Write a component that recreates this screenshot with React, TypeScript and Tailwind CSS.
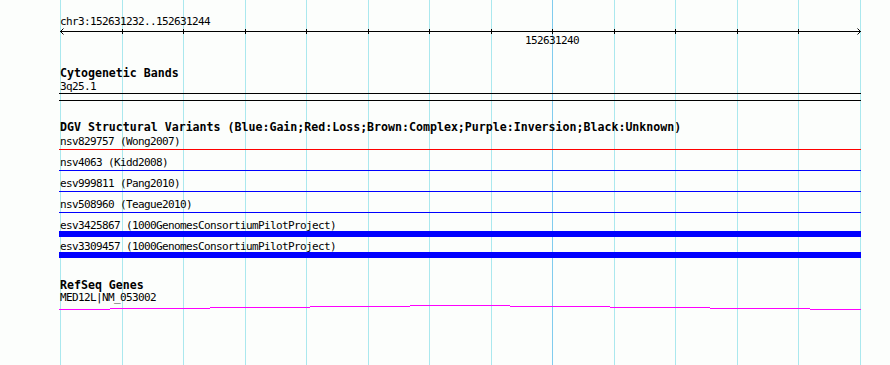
import React from "react";

const gridLines: { cls: string; major?: boolean }[] = [
  { cls: "left-[60px]" },
  { cls: "left-[122px]" },
  { cls: "left-[183px]" },
  { cls: "left-[245px]" },
  { cls: "left-[306px]" },
  { cls: "left-[368px]" },
  { cls: "left-[429px]" },
  { cls: "left-[491px]" },
  { cls: "left-[552px]", major: true },
  { cls: "left-[614px]" },
  { cls: "left-[675px]" },
  { cls: "left-[737px]" },
  { cls: "left-[798px]" },
  { cls: "left-[860px]" },
];

const tickXs = [122, 183, 245, 306, 368, 429, 491, 552, 614, 675, 737, 798];

const mono = "font-['DejaVu_Sans_Mono',monospace]";
const txt = `${mono} text-[11px] tracking-[-0.62px] leading-[13px] h-[13px] pl-[1px] whitespace-pre text-black`;
const bold = `${mono} text-[11.6px] font-bold leading-[13px] h-[13px] pl-[1px] whitespace-pre text-black`;

function Ruler() {
  return (
    <svg width={802} height={6} className="block overflow-visible" shapeRendering="crispEdges">
      <line x1={1} y1={3.5} x2={802} y2={3.5} stroke="#000" strokeWidth={1} />
      {tickXs.map((x) => (
        <line key={x} x1={x - 59 + 0.5} y1={1} x2={x - 59 + 0.5} y2={6} stroke="#000" strokeWidth={1} />
      ))}
      <polyline points="4.5,0.5 1.5,3.5 4.5,6.5" fill="none" stroke="#000" strokeWidth={1} shapeRendering="auto" />
      <polyline points="798.5,0.5 801.5,3.5 798.5,6.5" fill="none" stroke="#000" strokeWidth={1} shapeRendering="auto" />
    </svg>
  );
}

function GeneLine() {
  const segs: [number, number, number][] = [
    [59, 110, 5],
    [110, 210, 4],
    [210, 310, 3],
    [310, 410, 2],
    [410, 510, 1],
    [510, 610, 2],
    [610, 710, 3],
    [710, 810, 4],
    [810, 861, 5],
  ];
  return (
    <svg width={802} height={6} className="block" shapeRendering="crispEdges">
      {segs.map(([a, b, y]) => (
        <rect key={a} x={a - 59} y={y} width={b - a} height={1} fill="#ff00ff" />
      ))}
    </svg>
  );
}

export default function App() {
  return (
    <div className="relative w-[890px] h-[365px] overflow-hidden bg-[#fcfefc]">
      {gridLines.map((g, i) => (
        <div
          key={i}
          className={`absolute top-0 h-[365px] w-[1px] ${g.cls} ${g.major ? "bg-[#80ccee]" : "bg-[#aae8ee]"}`}
        />
      ))}
      <div className="relative z-10 flex flex-col pl-[59px] w-[861px]">
        <div className="h-[15px]" />
        <div className={txt}>chr3:152631232..152631244</div>
        <Ruler />
        <div className={`${txt} ml-[465px]`}>152631240</div>

        <div className="h-[20px]" />
        <div className={bold}>Cytogenetic Bands</div>
        <div className={txt}>3q25.1</div>
        <div className="h-[1px] w-[802px] bg-black" />
        <div className="h-[6px]" />
        <div className="h-[1px] w-[802px] bg-black" />

        <div className="h-[20px]" />
        <div className={bold}>DGV Structural Variants (Blue:Gain;Red:Loss;Brown:Complex;Purple:Inversion;Black:Unknown)</div>

        <div className="h-[1px]" />
        <div className={txt}>nsv829757 (Wong2007)</div>
        <div className="h-[1px]" />
        <div className="h-[1px] w-[802px] bg-[#ff0000]" />

        <div className="h-[6px]" />
        <div className={txt}>nsv4063 (Kidd2008)</div>
        <div className="h-[1px]" />
        <div className="h-[1px] w-[802px] bg-[#0000ff]" />

        <div className="h-[6px]" />
        <div className={txt}>esv999811 (Pang2010)</div>
        <div className="h-[1px]" />
        <div className="h-[1px] w-[802px] bg-[#0000ff]" />

        <div className="h-[6px]" />
        <div className={txt}>nsv508960 (Teague2010)</div>
        <div className="h-[1px]" />
        <div className="h-[1px] w-[802px] bg-[#0000ff]" />

        <div className="h-[6px]" />
        <div className={`${txt} !h-[12px]`}>esv3425867 (1000GenomesConsortiumPilotProject)</div>
        <div className="h-[6px] w-[802px] bg-[#0000ff]" />

        <div className="h-[3px]" />
        <div className={`${txt} !h-[12px]`}>esv3309457 (1000GenomesConsortiumPilotProject)</div>
        <div className="h-[6px] w-[802px] bg-[#0000ff]" />

        <div className="h-[21px]" />
        <div className={`${bold} !h-[12px] !leading-[12px]`}>RefSeq Genes</div>
        <div className={txt}>MED12L|NM_053002</div>
        <GeneLine />
      </div>
    </div>
  );
}
